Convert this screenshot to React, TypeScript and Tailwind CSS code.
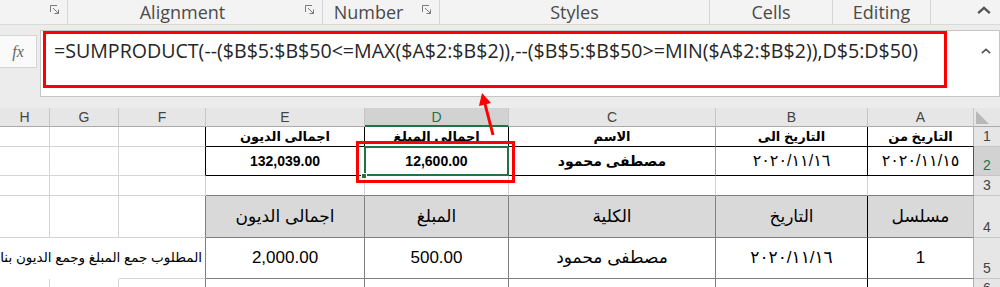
import React from "react";

const ARABIC = "font-['Liberation_Sans','DejaVu_Sans',sans-serif]";

// small "dialog launcher" glyph at the right of a ribbon group
const Launcher = () => (
  <svg width="10" height="10" viewBox="0 0 10 10" className="text-[#7a7a7a]">
    <path d="M0.5 7 V0.5 H7" fill="none" stroke="currentColor" strokeWidth="1" />
    <path d="M3 3 L8.5 8.5 M8.5 4.5 V8.5 H4.5" fill="none" stroke="currentColor" strokeWidth="1" />
  </svg>
);

const Chevron = ({ size = 12 }: { size?: number }) => (
  <svg width={size} height={size * 0.6} viewBox="0 0 12 7">
    <path d="M1 6 L6 1.5 L11 6" fill="none" stroke="#555" strokeWidth="2" />
  </svg>
);

type GroupProps = { w: string; label?: string; launcher?: boolean; children?: React.ReactNode };

const Group = ({ w, label, launcher, children }: GroupProps) => (
  <div className={`${w} h-full flex items-center border-r border-[#d6d6d6]`}>
    <div className="flex-1 text-center text-[18px] leading-[22px] text-[#4a4a4a] pb-[1px]">{label}</div>
    {launcher && (
      <div className="w-[25px] flex justify-start pl-[8px] pb-[4px]">
        <Launcher />
      </div>
    )}
    {children}
  </div>
);

type CellProps = {
  rc?: string;
  bc?: string;
  className?: string;
  children?: React.ReactNode;
};

// one sheet cell: draws its own right and bottom gridline
const Cell = ({ rc = "border-r-[#d4d4d4]", bc = "border-b-[#d4d4d4]", className = "", children }: CellProps) => (
  <div className={`border-r border-b ${rc} ${bc} flex items-center justify-center whitespace-nowrap ${className}`}>
    {children}
  </div>
);

const ColHead = ({ children, active }: { children: React.ReactNode; active?: boolean }) =>
  active ? (
    <div className="border-r border-r-[#c6c6c6] border-b-2 border-b-[#217346] bg-[#d2d2d2] text-[#217346] flex items-center justify-center text-[14px] pt-[1px]">
      {children}
    </div>
  ) : (
    <div className="border-r border-r-[#c6c6c6] border-b border-b-[#ababab] bg-[#e6e6e6] text-[#444] flex items-center justify-center text-[14px]">
      {children}
    </div>
  );

const RowHead = ({ children, active }: { children?: React.ReactNode; active?: boolean }) => (
  <div
    className={`border-b border-b-[#c6c6c6] flex items-end justify-center text-[14px] leading-[18px] pb-[1px] ${
      active ? "bg-[#d2d2d2] text-[#217346]" : "bg-[#e6e6e6] text-[#444]"
    }`}
  >
    {children}
  </div>
);

export default function App() {
  return (
    <div className="relative w-[1000px] h-[287px] overflow-hidden bg-white font-['Open_Sans',sans-serif]">
      {/* ribbon group labels */}
      <div className="h-[25px] flex bg-[#f3f3f3] border-b border-[#d9d9d9]">
        <Group w="w-[68px]" launcher />
        <Group w="w-[255px]" label="Alignment" launcher />
        <Group w="w-[117px]" label="Number" launcher />
        <Group w="w-[270px]" label="Styles" />
        <Group w="w-[123px]" label="Cells" />
        <Group w="w-[98px]" label="Editing" />
        <div className="flex-1 flex justify-end items-center pr-[9px] pb-[4px]">
          <Chevron size={14} />
        </div>
      </div>

      {/* formula bar */}
      <div className="h-[72px] flex items-start bg-[#ececec]">
        <div className="mt-[10px] w-[37px] h-[33px] bg-[#fafafa] border-y border-r border-[#d6d6d6] flex items-center justify-center">
          <span className="font-['Liberation_Serif',serif] italic text-[16px] text-[#666]">fx</span>
        </div>
        <div className="ml-[3px] mt-[5px] flex-1 h-[67px] bg-white border border-[#c6c6c6] flex items-start">
          <div className="ml-[2px] w-[904px] h-[57px] border-[3px] border-[#ff0000] pl-[8px] pt-[4px]">
            <div className="text-[19.6px] leading-[26px] text-[#262626] whitespace-nowrap">
              =SUMPRODUCT(--($B$5:$B$50&lt;=MAX($A$2:$B$2)),--($B$5:$B$50&gt;=MIN($A$2:$B$2)),D$5:D$50)
            </div>
          </div>
          <div className="flex-1 flex justify-end pr-[8px] pt-[17px]">
            <Chevron size={10} />
          </div>
        </div>
      </div>

      <div className="h-[11px] bg-[#ececec]" />

      {/* sheet */}
      <div
        className={`grid grid-cols-[50px_69px_87px_159px_144px_207px_152px_106px_26px] grid-rows-[19px_20px_29px_20px_42px_41px_20px] text-black ${ARABIC}`}
      >
        {/* column headers */}
        <ColHead>H</ColHead>
        <ColHead>G</ColHead>
        <ColHead>F</ColHead>
        <ColHead>E</ColHead>
        <ColHead active>D</ColHead>
        <ColHead>C</ColHead>
        <ColHead>B</ColHead>
        <ColHead>A</ColHead>
        <div className="bg-[#e6e6e6] border-b border-b-[#ababab] flex items-start pt-[3px] pl-[2px]">
          <svg width="14" height="14" viewBox="0 0 14 14">
            <polygon points="0,0 0,13 13,13" fill="#b8b8b8" />
          </svg>
        </div>

        {/* row 1 */}
        <Cell />
        <Cell />
        <Cell rc="border-r-black" />
        <Cell rc="border-r-black" bc="border-b-black" className="font-bold text-[13px]">اجمالى الديون</Cell>
        <Cell rc="border-r-black" bc="border-b-black" className="font-bold text-[13px]">اجمالى المبلغ</Cell>
        <Cell rc="border-r-[#a0a0a0]" bc="border-b-black" className="font-bold text-[13px]">الاسم</Cell>
        <Cell rc="border-r-black" bc="border-b-black" className="font-bold text-[13px]">التاريخ الى</Cell>
        <Cell rc="border-r-[#b0b0b0]" bc="border-b-black" className="font-bold text-[13px]">التاريخ من</Cell>
        <RowHead>1</RowHead>

        {/* row 2 */}
        <Cell />
        <Cell />
        <Cell rc="border-r-black" />
        <Cell rc="border-r-black" bc="border-b-black" className="font-bold text-[14px]">132,039.00</Cell>
        <Cell rc="border-r-black" bc="border-b-black" className="relative font-bold text-[14px]">
          12,600.00
          <div className="absolute -left-[1px] -top-[1px] -right-[1px] -bottom-[1px] border-2 border-[#217346]" />
          <div className="absolute -left-[4px] -bottom-[4px] w-[6px] h-[6px] bg-[#217346] border border-white" />
        </Cell>
        <Cell rc="border-r-[#a0a0a0]" bc="border-b-black" className="font-bold text-[14px]">مصطفى محمود</Cell>
        <Cell rc="border-r-black" bc="border-b-black" className="text-[16px]">٢٠٢٠/١١/١٦</Cell>
        <Cell rc="border-r-[#217346]" bc="border-b-black" className="text-[16px]">٢٠٢٠/١١/١٥</Cell>
        <RowHead active>2</RowHead>

        {/* row 3 */}
        <Cell />
        <Cell />
        <Cell />
        <Cell bc="border-b-[#7f7f7f]" />
        <Cell bc="border-b-[#7f7f7f]" />
        <Cell bc="border-b-[#7f7f7f]" />
        <Cell bc="border-b-[#7f7f7f]" />
        <Cell rc="border-r-[#b0b0b0]" bc="border-b-[#7f7f7f]" />
        <RowHead>3</RowHead>

        {/* row 4 */}
        <Cell />
        <Cell />
        <Cell rc="border-r-[#7f7f7f]" />
        <Cell rc="border-r-[#7f7f7f]" bc="border-b-[#7f7f7f]" className="bg-[#d9d9d9] text-[17px]">اجمالى الديون</Cell>
        <Cell rc="border-r-[#7f7f7f]" bc="border-b-[#7f7f7f]" className="bg-[#d9d9d9] text-[17px]">المبلغ</Cell>
        <Cell rc="border-r-[#7f7f7f]" bc="border-b-[#7f7f7f]" className="bg-[#d9d9d9] text-[17px]">الكلية</Cell>
        <Cell rc="border-r-black" bc="border-b-[#7f7f7f]" className="bg-[#d9d9d9] text-[17px]">التاريخ</Cell>
        <Cell rc="border-r-[#b0b0b0]" bc="border-b-[#7f7f7f]" className="bg-[#d9d9d9] text-[17px]">مسلسل</Cell>
        <RowHead>4</RowHead>

        {/* row 5 — note in F overflows leftwards over G and H */}
        <Cell rc="border-r-transparent" bc="border-b-transparent" />
        <Cell rc="border-r-transparent" bc="border-b-transparent" />
        <Cell rc="border-r-[#7f7f7f]" className="!justify-end pr-[3px] overflow-visible">
          <span dir="rtl" className="shrink-0 text-[13.5px]">
            المطلوب جمع المبلغ وجمع الديون بناء على التاريخ
          </span>
        </Cell>
        <Cell rc="border-r-[#7f7f7f]" bc="border-b-[#7f7f7f]" className="text-[17px]">2,000.00</Cell>
        <Cell rc="border-r-[#7f7f7f]" bc="border-b-[#7f7f7f]" className="text-[17px]">500.00</Cell>
        <Cell rc="border-r-[#7f7f7f]" bc="border-b-[#7f7f7f]" className="text-[17px]">مصطفى محمود</Cell>
        <Cell rc="border-r-black" bc="border-b-[#7f7f7f]" className="text-[17px]">٢٠٢٠/١١/١٦</Cell>
        <Cell rc="border-r-[#b0b0b0]" bc="border-b-[#7f7f7f]" className="text-[17px]">1</Cell>
        <RowHead>5</RowHead>

        {/* row 6 */}
        <Cell />
        <Cell />
        <Cell rc="border-r-[#7f7f7f]" />
        <Cell rc="border-r-[#7f7f7f]" bc="border-b-[#7f7f7f]" />
        <Cell rc="border-r-[#7f7f7f]" bc="border-b-[#7f7f7f]" />
        <Cell rc="border-r-[#7f7f7f]" bc="border-b-[#7f7f7f]" />
        <Cell rc="border-r-black" bc="border-b-[#7f7f7f]" />
        <Cell rc="border-r-[#b0b0b0]" bc="border-b-[#7f7f7f]" />
        <RowHead>6</RowHead>
      </div>

      {/* red annotation around D2 and arrow to the formula */}
      <div className="absolute left-[356px] top-[141px] w-[159px] h-[42px] border-[3px] border-[#ff0000]" />
      <svg className="absolute left-[470px] top-[88px]" width="30" height="52" viewBox="0 0 30 52">
        <line x1="23" y1="47" x2="15" y2="16" stroke="#ff0000" strokeWidth="3" />
        <polygon points="12,5 21,15 9,18" fill="#ff0000" />
      </svg>
    </div>
  );
}
